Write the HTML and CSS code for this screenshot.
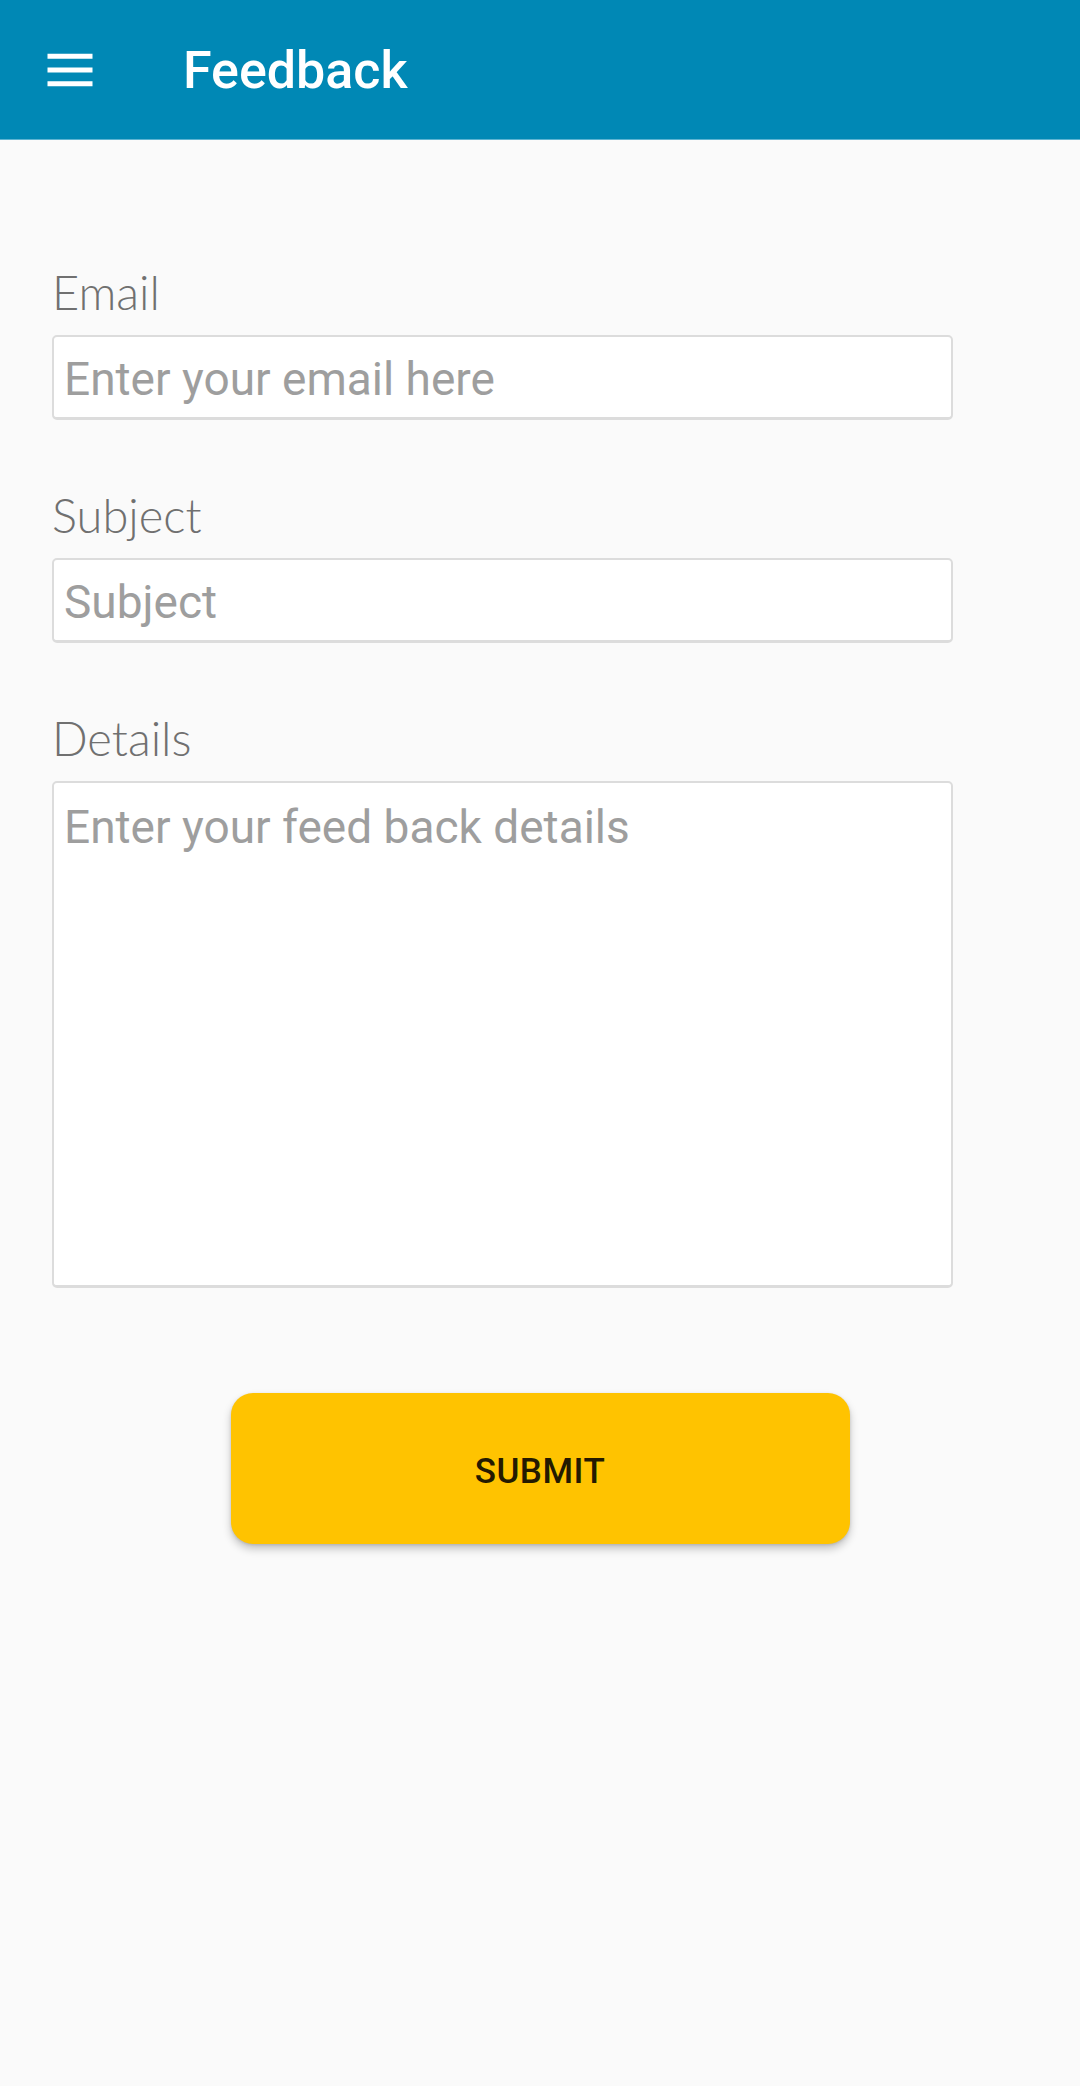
FILE: index.html
```html
<!DOCTYPE html>
<html lang="en">
<head>
<meta charset="utf-8">
<title>Feedback</title>
<link rel="stylesheet" href="styles.css">
</head>
<body>
<header class="appbar">
  <svg class="menu-icon" viewBox="0 0 24 24" width="60" height="60" aria-hidden="true">
    <path d="M3 5.5h18v2H3zM3 11h18v2H3zM3 16.5h18v2H3z" fill="#ffffff"/>
  </svg>
  <h1 class="title">Feedback</h1>
</header>
<main class="content">
  <form class="form">
    <div class="field">
      <label class="label">Email</label>
      <div class="box"><span class="placeholder">Enter your email here</span></div>
    </div>
    <div class="field">
      <label class="label">Subject</label>
      <div class="box"><span class="placeholder">Subject</span></div>
    </div>
    <div class="field">
      <label class="label">Details</label>
      <div class="box box-area"><span class="placeholder">Enter your feed back details</span></div>
    </div>
  </form>
  <div class="actions">
    <button class="submit" type="button">SUBMIT</button>
  </div>
</main>
</body>
</html>
```
FILE: styles.css
```css
html, body {
  margin: 0;
  padding: 0;
}
body {
  background: #fafafa;
  font-family: Roboto, "Liberation Sans", sans-serif;
  width: 1080px;
  min-height: 2086px;
}
.appbar {
  height: 140px;
  background: #0088b5;
  display: flex;
  align-items: center;
  box-sizing: border-box;
  border-bottom: 1px solid #5db4d2;
}
.menu-icon {
  display: block;
  margin-left: 40px;
  flex: none;
}
.title {
  margin: 0 0 0 83px;
  color: #ffffff;
  font-family: Roboto, "Liberation Sans", sans-serif;
  font-weight: 500;
  font-size: 52px;
  line-height: 1;
  padding-top: 2px;
}
.content {
  display: block;
}
.form {
  padding: 124px 0 0 52px;
  width: 901px;
  display: flex;
  flex-direction: column;
  gap: 67px;
}
.field {
  display: flex;
  flex-direction: column;
  gap: 15px;
}
.label {
  font-family: Lato, "Open Sans", sans-serif;
  font-weight: 300;
  font-size: 47px;
  line-height: 56px;
  color: #707070;
  display: block;
}
.box {
  box-sizing: border-box;
  height: 85px;
  background: #ffffff;
  border: 2px solid #dcdcdc;
  border-bottom-width: 3px;
  border-radius: 5px;
  display: flex;
  align-items: center;
  padding: 3px 10px 0 10px;
}
.box-area {
  height: 507px;
  align-items: flex-start;
  padding-top: 17px;
}
.placeholder {
  font-family: Roboto, "Liberation Sans", sans-serif;
  font-size: 46px;
  line-height: 54px;
  color: #9e9e9e;
}
.actions {
  display: flex;
  justify-content: center;
  padding-top: 105px;
}
.submit {
  width: 619px;
  height: 151px;
  border: none;
  border-radius: 22px;
  background: #ffc300;
  color: #241a00;
  font-family: Roboto, "Liberation Sans", sans-serif;
  font-weight: 500;
  font-size: 35px;
  letter-spacing: 0.5px;
  box-shadow: 0 5px 8px rgba(0, 0, 0, 0.22), 0 1px 3px rgba(0, 0, 0, 0.12);
  cursor: pointer;
  padding: 6px 0 0 0;
}
```
